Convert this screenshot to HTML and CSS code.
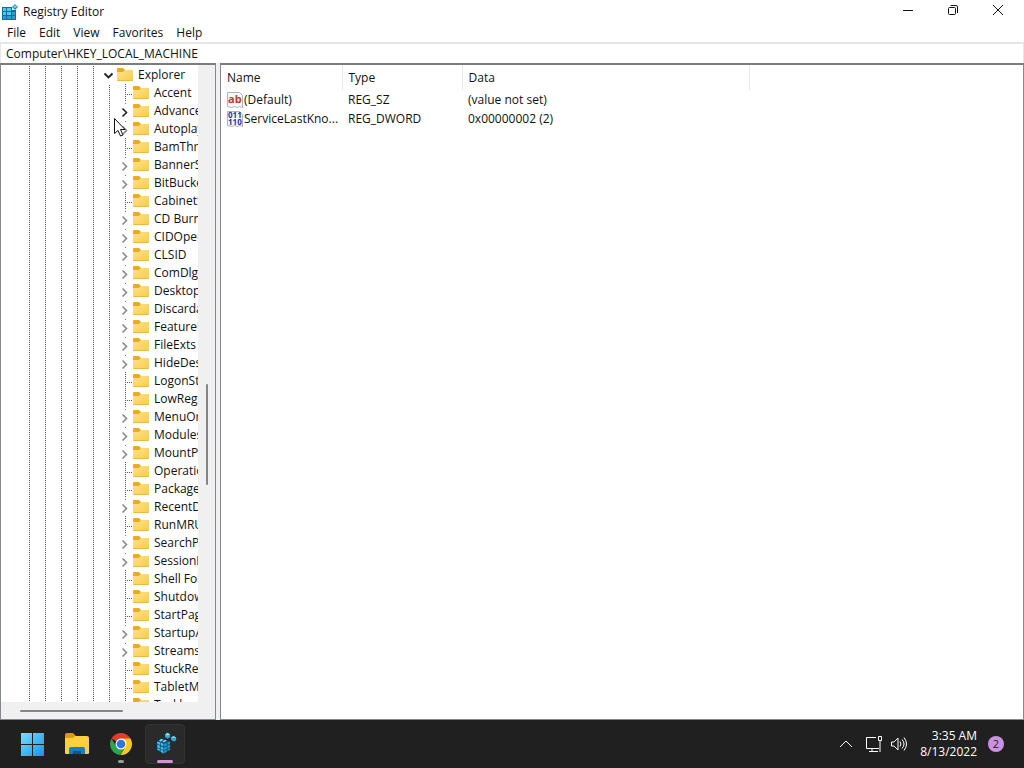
FILE: index.html
```html
<!DOCTYPE html>
<html lang="en">
<head>
    <meta charset="UTF-8">
    <title>Registry Editor</title>
    <link rel="stylesheet" href="styles.css">
</head>
<body>
<!-- shared icons -->
<svg class="sprite" aria-hidden="true">
    <defs>
        <linearGradient id="yellow" x1="0" y1="0" x2="1" y2="1">
            <stop offset="0" stop-color="#ffe28c"/>
            <stop offset="1" stop-color="#f8cb48"/>
        </linearGradient>
    </defs>
    <symbol id="folder" viewBox="0 0 16 14">
        <path fill="#e8ab22" d="M0 1a1 1 0 0 1 1-1h5l2 2h7a1 1 0 0 1 1 1v3H0z"/>
        <path fill="url(#yellow)" d="M0 4h6l2-2h7a1 1 0 0 1 1 1v9a1 1 0 0 1-1 1H1a1 1 0 0 1-1-1z"/>
        <path fill="#eabb4a" d="M0 12h16a1 1 0 0 1-1 1H1a1 1 0 0 1-1-1z"/>
    </symbol>
    <symbol id="chevron" viewBox="0 0 16 18">
        <path fill="none" stroke="currentColor" stroke-width="1.600" d="M5.500 6.500L9.500 10.500l-4 4"/>
    </symbol>
    <symbol id="chevron-down" viewBox="0 0 16 18">
        <path fill="none" stroke="currentColor" stroke-width="1.800" d="M3.500 7.500l4 4 4-4"/>
    </symbol>
</svg>

<main class="window">
    <header class="titlebar">
        <svg class="app-icon" viewBox="0 0 16 16">
            <path fill="#116f9f" d="M0 3h10v3h4v10H0z"/>
            <path fill="#4fc9ee" d="M1 4h3v3H1zM5 4h4v3H5zM1 8h3v3H1zM5 8h4v3H5z"/>
            <path fill="#249fd0" d="M1 12h3v3H1zM5 12h4v3H5zM10 8h3v3h-3zM10 12h3v3h-3z"/>
            <path fill="#168cbb" d="M13 0l3 3-3 3-3-3z"/>
            <path fill="#73d9f5" d="M13 1l2 2-2 1-2-1z"/>
        </svg>
        <h1>Registry Editor</h1>
        <div class="window-buttons">
            <button aria-label="Minimize"><svg viewBox="0 0 12 12"><path d="M1 6.500h10"/></svg></button>
            <button aria-label="Restore"><svg viewBox="0 0 12 12"><rect x="1.500" y="3.500" width="7" height="7" rx="1"/><path d="M3.500 1.500H9a1.500 1.500 0 0 1 1.500 1.500v6"/></svg></button>
            <button aria-label="Close"><svg viewBox="0 0 12 12"><path d="M1 1l10 10M11 1L1 11"/></svg></button>
        </div>
    </header>
    <nav class="menu">
        <button>File</button>
        <button>Edit</button>
        <button>View</button>
        <button>Favorites</button>
        <button>Help</button>
    </nav>
    <input class="address" type="text" aria-label="Address" value="Computer\HKEY_LOCAL_MACHINE">

    <div class="panes">
        <section class="tree-pane">
            <ul class="tree">
                <li>
                    <div class="key root">
                        <button class="expander" aria-label="Collapse Explorer"><svg><use href="#chevron-down"/></svg></button>
                        <svg class="folder"><use href="#folder"/></svg>
                        <span>Explorer</span>
                    </div>
                    <ul class="subkeys" id="subkeys"></ul>
                </li>
            </ul>
            <div class="scroll-y"><div class="thumb"></div></div>
            <div class="scroll-x"><div class="thumb"></div></div>
        </section>
        <section class="value-pane">
            <table class="values">
                <thead>
                    <tr><th class="col-name">Name</th><th class="col-type">Type</th><th class="col-data">Data</th></tr>
                </thead>
                <tbody>
                    <tr>
                        <td>
                            <div class="value-name">
                                <svg class="value-icon" viewBox="0 0 16 16"><path fill="#f7f8f8" stroke="#a9b4b4" d="M.5.500h12l3 3v12l-3-1-2 1-3-1-3 1-4-1z"/><text class="string-glyph" x="1" y="11">ab</text></svg>
                                <span>(Default)</span>
                            </div>
                        </td>
                        <td>REG_SZ</td>
                        <td>(value not set)</td>
                    </tr>
                    <tr>
                        <td>
                            <div class="value-name">
                                <svg class="value-icon" viewBox="0 0 16 16"><path fill="#f7f8f8" stroke="#a9b4b4" d="M.5.500h12l3 3v12l-3-1-2 1-3-1-3 1-4-1z"/><text class="binary-glyph" x="1" y="7">011</text><text class="binary-glyph" x="1" y="14">110</text></svg>
                                <span>ServiceLastKno...</span>
                            </div>
                        </td>
                        <td>REG_DWORD</td>
                        <td>0x00000002 (2)</td>
                    </tr>
                </tbody>
            </table>
        </section>
    </div>
</main>

<footer class="taskbar">
    <div class="apps">
        <button aria-label="Start">
            <svg viewBox="0 0 24 24"><defs><linearGradient id="win" x1="0" y1="0" x2="1" y2="1"><stop offset="0" stop-color="#79dcff"/><stop offset="1" stop-color="#1595e5"/></linearGradient></defs><path fill="url(#win)" d="M0 1h11v11H0zM12 1h11v11H12zM0 13h11v11H0zM12 13h11v11H12z"/></svg>
        </button>
        <button aria-label="File Explorer">
            <svg viewBox="0 0 24 24"><path fill="#d99b13" d="M0 3a2 2 0 0 1 2-2h6l3 3h11v5H0z"/><path fill="#fbcf3f" d="M0 6h8l2-2h12a2 2 0 0 1 2 2v15a1 1 0 0 1-1 1H1a1 1 0 0 1-1-1z"/><path fill="#1580c8" d="M4 22v-5a2 2 0 0 1 2-2h12a2 2 0 0 1 2 2v5z"/><path fill="#0d5694" d="M8 19h8v3H8z"/></svg>
        </button>
        <button class="running" aria-label="Google Chrome">
            <svg viewBox="0 0 24 24"><path fill="#e33b2e" d="M12 12L2.500 6.500a11 11 0 0 1 19 0z"/><path fill="#fbc918" d="M12 6.500h9.500a11 11 0 0 1-10 16.500l5-8.500z"/><path fill="#2da34d" d="M2.500 6.500l5 8.200a5 5 0 0 0 8.500.800L11.500 23A11 11 0 0 1 2.500 6.500z"/><circle cx="12" cy="12" r="5.500" fill="#fff"/><circle cx="12" cy="12" r="4.300" fill="#2b75e8"/></svg>
        </button>
        <button class="running active" aria-label="Registry Editor">
            <svg viewBox="-2 -2 28 28">
                <path fill="#0d5785" d="M3 9l6-3 8 3v10l-7 4-7-4z"/>
                <path fill="#45c1eb" d="M3 9l3 1v3l-3-1zM7 10l3 2v3l-3-2zM3 13l3 1v3l-3-1zM7 15l3 1v3l-3-1zM3 17l3 1v2l-3-1zM7 19l3 1v3l-3-2z"/>
                <path fill="#2596c7" d="M11 12l3-1v3l-3 1zM15 10l3-1v3l-3 1zM11 16l3-1v3l-3 1zM15 14l3-1v3l-3 1zM11 20l3-1v2l-3 2zM15 18l3-1v2l-3 1z"/>
                <path fill="#7ddef7" d="M5 8l3-2 2 1-3 2zM9 9l3-2 2 1-3 2z"/>
                <path fill="#2da6d5" d="M12 1l3-2 3 2v3l-3 2-3-2zM19 4l3-1 3 1v4l-3 1-3-2z"/>
                <path fill="#83e1f7" d="M12 1l3-2 3 2-3 1zM19 4l3-1 3 1-3 1z"/>
            </svg>
        </button>
    </div>
    <div class="tray">
        <button class="tray-more" aria-label="Show hidden icons"><svg viewBox="0 0 14 18"><path d="M1 12l6-6 6 6"/></svg></button>
        <button class="tray-status" aria-label="Network and volume">
            <svg viewBox="0 0 18 18"><path d="M11 2.500H1.500v11H14M7 13.500v3M4 16.500h9M13.500 1.500h3v4h-3zM15 6v11"/></svg>
            <svg viewBox="0 0 18 18"><path d="M1.500 7v4H4l4 4V3L4 7zM10 6.500q2 2.500 0 5M12 4.500q4 4.500 0 9M14 2.500q5 6.500 0 13"/></svg>
        </button>
        <div class="clock"><time>3:35 AM</time><time>8/13/2022</time></div>
        <span class="badge">2</span>
    </div>
</footer>

<svg class="pointer" viewBox="0 0 13 20"><path fill="#fff" stroke="#111" d="M1.500 1.500v15l3.500-3 2.500 5.500 2.500-1-2.500-5.500H12z"/></svg>

<script>
    // "+" in front of a name: the key has subkeys of its own
    var keys = [
        "Accent", "+Advanced", "+AutoplayHandlers", "BamThrottling", "+BannerStore",
        "+BitBucket", "CabinetState", "+CD Burning", "+CIDOpen", "+CLSID",
        "+ComDlg32", "+Desktop", "+Discardable", "+FeatureUsage", "+FileExts",
        "+HideDesktopIcons", "LogonStats", "LowRegistry", "+MenuOrder", "+Modules",
        "+MountPoints2", "OperationStatusManager", "Package Installation", "+RecentDocs", "RunMRU",
        "+SearchPlatform", "+SessionInfo", "Shell Folders", "Shutdown", "StartPage",
        "+StartupApproved", "+Streams", "StuckRects3", "TabletMode", "Taskband"
    ];
    var html = "";
    for (var i = 0; i < keys.length; i++) {
        var parent = keys[i].charAt(0) === "+";
        var name = parent ? keys[i].slice(1) : keys[i];
        html += '<li class="key">';
        if (parent) {
            html += '<button class="expander" aria-label="Expand ' + name + '"><svg><use href="#chevron"/></svg></button>';
        } else {
            html += '<span class="branch"></span>';
        }
        html += '<svg class="folder"><use href="#folder"/></svg><span>' + name + '</span></li>';
    }
    document.getElementById("subkeys").innerHTML = html;
</script>
</body>
</html>
```
FILE: styles.css
```css
* {
    box-sizing: border-box;
}
body {
    margin: 0;
    height: 100vh;
    display: flex;
    flex-direction: column;
    overflow: hidden;
    background: #fff;
    color: #111;
    font: 12px/18px "Open Sans", "Noto Sans", sans-serif;
}
button {
    display: flex;
    align-items: center;
    justify-content: center;
    padding: 0;
    border: 0;
    background: none;
    color: inherit;
    font: inherit;
}
.sprite {
    position: absolute;
    width: 0;
    height: 0;
}

.window {
    flex: 1;
    min-height: 0;
    display: flex;
    flex-direction: column;
}
.titlebar {
    display: flex;
    align-items: center;
    height: 24px;
    padding: 0 4px 0 2px;
}
.app-icon {
    width: 16px;
    height: 16px;
    margin-right: 5px;
}
.titlebar h1 {
    flex: 1;
    margin: 0;
    font-size: 12px;
    font-weight: normal;
}
.window-buttons {
    display: flex;
    align-self: flex-start;
}
.window-buttons button {
    width: 45px;
    height: 20px;
}
.window-buttons svg {
    width: 12px;
    height: 12px;
    fill: none;
    stroke: #111;
}
.menu {
    display: flex;
    gap: 13px;
    height: 18px;
    padding-left: 7px;
}
.address {
    width: 100%;
    height: 21px;
    padding: 0 5px;
    border: 1px solid #e6e6e6;
    border-width: 2px 1px 0;
    outline: 0;
    background: #fff;
    color: inherit;
    font: inherit;
}

.panes {
    flex: 1;
    min-height: 0;
    display: grid;
    grid-template-columns: 216px 1fr;
    grid-template-rows: 100%;
    gap: 4px;
    background: #f0f0f0;
}
.tree-pane, .value-pane {
    min-width: 0;
    border: 1px solid #828790;
    border-top: 2px solid #7c7c7c;
    background: #fff;
}
.tree-pane {
    display: grid;
    grid-template-columns: 1fr 17px;
    grid-template-rows: minmax(0, 1fr) 17px;
}
.tree, .subkeys {
    margin: 0;
    padding: 0;
    list-style: none;
}
/* white stripes over the solid guides turn them into dots */
.tree {
    overflow: hidden;
    padding-top: 1px;
    background:
        repeating-linear-gradient(to bottom, #fff 0 1px, transparent 1px 2px),
        repeating-linear-gradient(to right, #555 0 1px, transparent 1px 16px) 28px 0 / 80px 100% no-repeat;
}
.subkeys {
    background:
        repeating-linear-gradient(to bottom, #fff 0 1px, transparent 1px 2px) 108px 0 / 1px 100% no-repeat,
        linear-gradient(#555, #555) 108px 0 / 1px 100% no-repeat;
}
.key {
    display: flex;
    height: 18px;
    padding-left: 116px;
    white-space: nowrap;
}
.key.root {
    padding-left: 100px;
}
.key span {
    flex: none;
}
.expander, .branch {
    flex: none;
    width: 16px;
    height: 18px;
}
.expander svg {
    width: 16px;
    height: 18px;
}
.expander {
    color: #8a8a8a;
}
.root .expander, .key:nth-child(2) .expander {
    color: #222;
}
.branch {
    background:
        repeating-linear-gradient(to bottom, #555 0 1px, transparent 1px 2px) 8px 0 / 1px 100% no-repeat,
        repeating-linear-gradient(to right, #555 0 1px, transparent 1px 2px) 8px 10px / 8px 1px no-repeat;
}
/* what is left of the branch line above the arrow */
.subkeys .expander {
    background: linear-gradient(#777, #777) 8px 1px / 1px 1px no-repeat;
}
.folder {
    flex: none;
    width: 16px;
    height: 14px;
    margin: 2px 5px 0 0;
}
.scroll-y, .scroll-x {
    display: grid;
    background: #f0f0f0;
}
.scroll-y {
    grid-template-rows: 50fr 16fr 34fr;
    justify-items: center;
}
.scroll-x {
    grid-column: 1 / 3;
    grid-template-columns: 9fr 48fr 43fr;
    align-items: center;
}
.thumb {
    border-radius: 1px;
    background: #858585;
}
.scroll-y .thumb {
    grid-row: 2;
    width: 2px;
}
.scroll-x .thumb {
    grid-column: 2;
    height: 2px;
}

.values {
    border-collapse: collapse;
    table-layout: fixed;
    width: 529px;
}
.values th {
    height: 25px;
    padding: 0 6px;
    border-right: 1px solid #e8e8e8;
    font-weight: normal;
    text-align: left;
}
.values td {
    height: 19px;
    padding: 0 6px;
    white-space: nowrap;
}
.col-name {
    width: 121px;
}
.col-type {
    width: 120px;
}
.value-name {
    display: flex;
    align-items: center;
    gap: 1px;
}
.value-icon {
    flex: none;
    width: 16px;
    height: 16px;
}
.string-glyph {
    fill: #c23b35;
    font: bold 11px "Open Sans", sans-serif;
}
.binary-glyph {
    fill: #2434b0;
    font: bold 8px "Open Sans", sans-serif;
}

.taskbar {
    display: flex;
    justify-content: space-between;
    height: 48px;
    padding: 0 20px 0 13px;
    background: #202020;
    color: #fff;
}
.apps, .tray {
    display: flex;
    align-items: center;
}
.apps {
    gap: 4px;
}
.apps button {
    position: relative;
    width: 40px;
    height: 40px;
    border-radius: 4px;
}
.apps svg {
    width: 24px;
    height: 24px;
}
.apps .active {
    border: 1px solid #333;
    background: #2a2a2a;
}
.running::after {
    content: "";
    position: absolute;
    bottom: 1px;
    width: 6px;
    height: 3px;
    border-radius: 2px;
    background: #9a9a9a;
}
.active::after {
    bottom: 0;
    width: 16px;
    background: #d293d9;
}
.tray svg {
    width: 18px;
    height: 18px;
    fill: none;
    stroke: #fff;
}
.tray .tray-more svg {
    width: 14px;
}
.tray-more {
    margin-right: 12px;
}
.tray-status {
    gap: 7px;
    margin-right: 12px;
}
.clock {
    display: flex;
    flex-direction: column;
    text-align: right;
    line-height: 16px;
}
.badge {
    width: 16px;
    height: 16px;
    margin-left: 11px;
    border-radius: 50%;
    background: #cc92df;
    color: #222;
    font-size: 11px;
    line-height: 16px;
    text-align: center;
}
.pointer {
    position: absolute;
    top: 117px;
    left: 113px;
    width: 13px;
    height: 20px;
}
```
